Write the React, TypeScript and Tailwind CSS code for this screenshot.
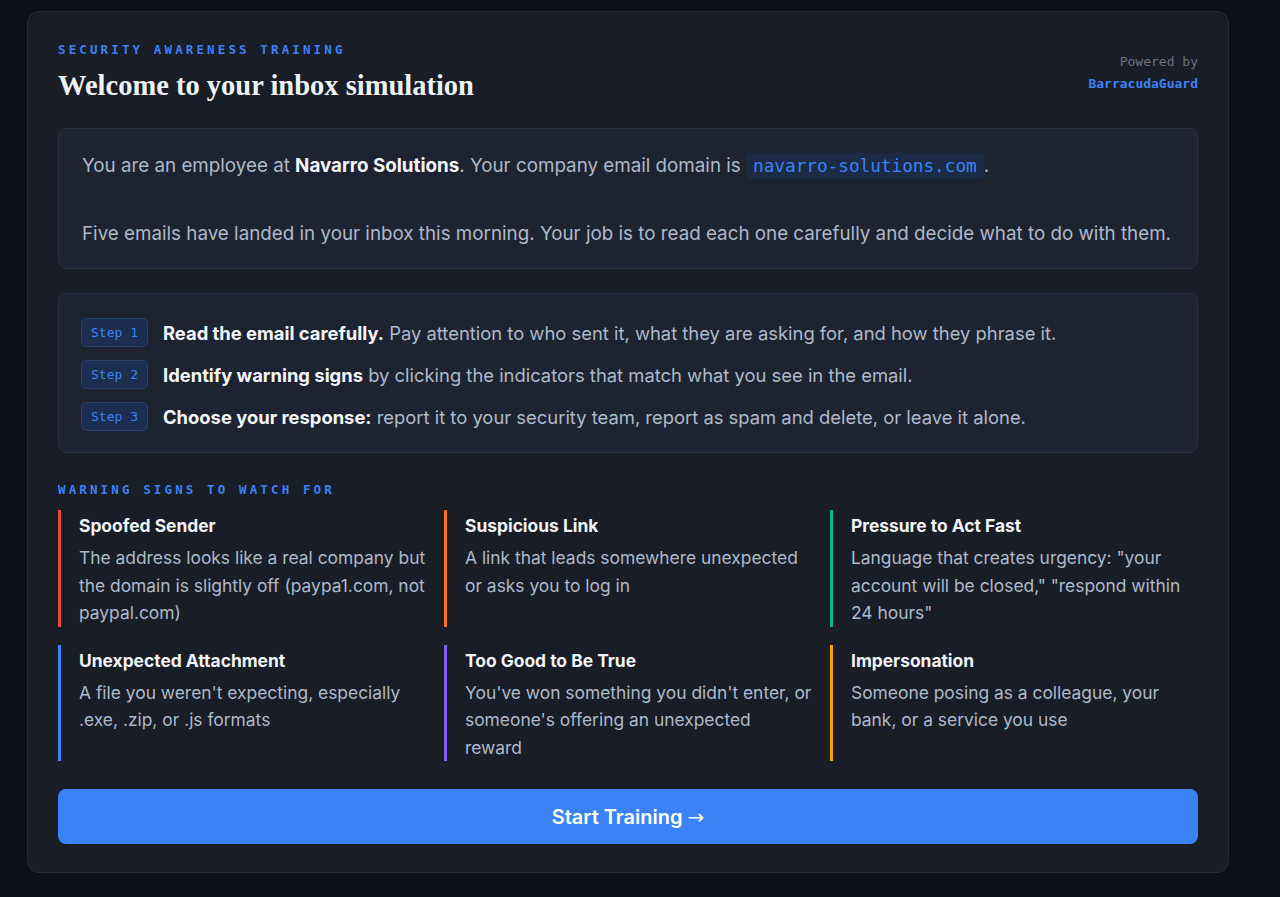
const steps = [
  {
    label: "Step 1",
    strong: "Read the email carefully.",
    rest: " Pay attention to who sent it, what they are asking for, and how they phrase it.",
  },
  {
    label: "Step 2",
    strong: "Identify warning signs",
    rest: " by clicking the indicators that match what you see in the email.",
  },
  {
    label: "Step 3",
    strong: "Choose your response:",
    rest: " report it to your security team, report as spam and delete, or leave it alone.",
  },
]

const signs = [
  {
    title: "Spoofed Sender",
    text: "The address looks like a real company but the domain is slightly off (paypa1.com, not paypal.com)",
    border: "border-[#ef4444]",
  },
  {
    title: "Suspicious Link",
    text: "A link that leads somewhere unexpected or asks you to log in",
    border: "border-[#f97316]",
  },
  {
    title: "Pressure to Act Fast",
    text: 'Language that creates urgency: "your account will be closed," "respond within 24 hours"',
    border: "border-[#10b981]",
  },
  {
    title: "Unexpected Attachment",
    text: "A file you weren't expecting, especially .exe, .zip, or .js formats",
    border: "border-[#3b82f6]",
  },
  {
    title: "Too Good to Be True",
    text: "You've won something you didn't enter, or someone's offering an unexpected reward",
    border: "border-[#8b5cf6]",
  },
  {
    title: "Impersonation",
    text: "Someone posing as a colleague, your bank, or a service you use",
    border: "border-[#f59e0b]",
  },
]

const mono = "font-['DejaVu_Sans_Mono',monospace]"

export default function App() {
  return (
    <div className="min-h-[897px] bg-[#0d1017] pt-[11px] pl-[27px] font-['Inter',sans-serif]">
      <div className="w-[1202px] rounded-xl border border-[#272c37] bg-[#191d26] px-[30px] pt-[30px] pb-[28px]">
        {/* header */}
        <div className="flex items-center justify-between">
          <div>
            <div className={`${mono} text-[12.5px] font-bold uppercase leading-4 tracking-[0.25em] text-[#3b82f6]`}>
              Security Awareness Training
            </div>
            <h1 className="mt-[11px] font-['Liberation_Serif',serif] text-[28.5px] font-bold leading-[34px] text-[#eef1f6]">
              Welcome to your inbox simulation
            </h1>
          </div>
          <div className={`${mono} text-right text-[13px] leading-[22px]`}>
            <div className="text-[#6b7280]">Powered by</div>
            <div className="font-bold text-[#3b82f6]">BarracudaGuard</div>
          </div>
        </div>

        {/* intro */}
        <div className="mt-[25px] rounded-lg border border-[#2a303d] bg-[#1e2331] px-[23px] pt-[20px] pb-[17px] text-[18.8px] leading-[34px] text-[#aeb9c9]">
          <p>
            You are an employee at <strong className="font-bold text-[#f3f5f9]">Navarro Solutions</strong>. Your company
            email domain is{" "}
            <code className={`${mono} rounded bg-[#1b2b45] px-[7px] py-[3px] text-[17.7px] text-[#3b82f6]`}>
              navarro-solutions.com
            </code>
            .
          </p>
          <p className="mt-[34px]">
            Five emails have landed in your inbox this morning. Your job is to read each one carefully and decide what to
            do with them.
          </p>
        </div>

        {/* steps */}
        <div className="mt-[24px] flex flex-col gap-[13px] rounded-lg border border-[#2a303d] bg-[#1e2331] px-[22px] pt-[24px] pb-[21px]">
          {steps.map((s) => (
            <div key={s.label} className="flex items-center gap-[15px]">
              <span
                className={`${mono} rounded-[5px] border border-[#26406c] bg-[#1c2e50] px-[9px] py-[3px] text-[13px] leading-[21px] text-[#3b82f6]`}
              >
                {s.label}
              </span>
              <p className="text-[18.4px] leading-[28px] text-[#aeb9c9]">
                <strong className="font-bold text-[#f3f5f9]">{s.strong}</strong>
                {s.rest}
              </p>
            </div>
          ))}
        </div>

        {/* warning signs */}
        <div className={`${mono} mt-[29px] text-[12.5px] font-bold uppercase leading-4 tracking-[0.25em] text-[#3b82f6]`}>
          Warning Signs to Watch For
        </div>
        <div className="mt-[12px] grid grid-cols-3 gap-[18px]">
          {signs.map((s) => (
            <div key={s.title} className={`border-l-[3px] ${s.border} pl-[18px] pt-[4px]`}>
              <h3 className="text-[17.4px] font-bold leading-6 text-[#f1f4f8]">{s.title}</h3>
              <p className="mt-[6px] text-[17.4px] leading-[27.5px] text-[#aeb9c9]">{s.text}</p>
            </div>
          ))}
        </div>

        <button className="mt-[28px] h-[55px] w-full rounded-lg bg-[#3b82f6] text-[20px] font-semibold text-white">
          Start Training <span className="font-['DejaVu_Sans',sans-serif] font-normal">→</span>
        </button>
      </div>
    </div>
  )
}
